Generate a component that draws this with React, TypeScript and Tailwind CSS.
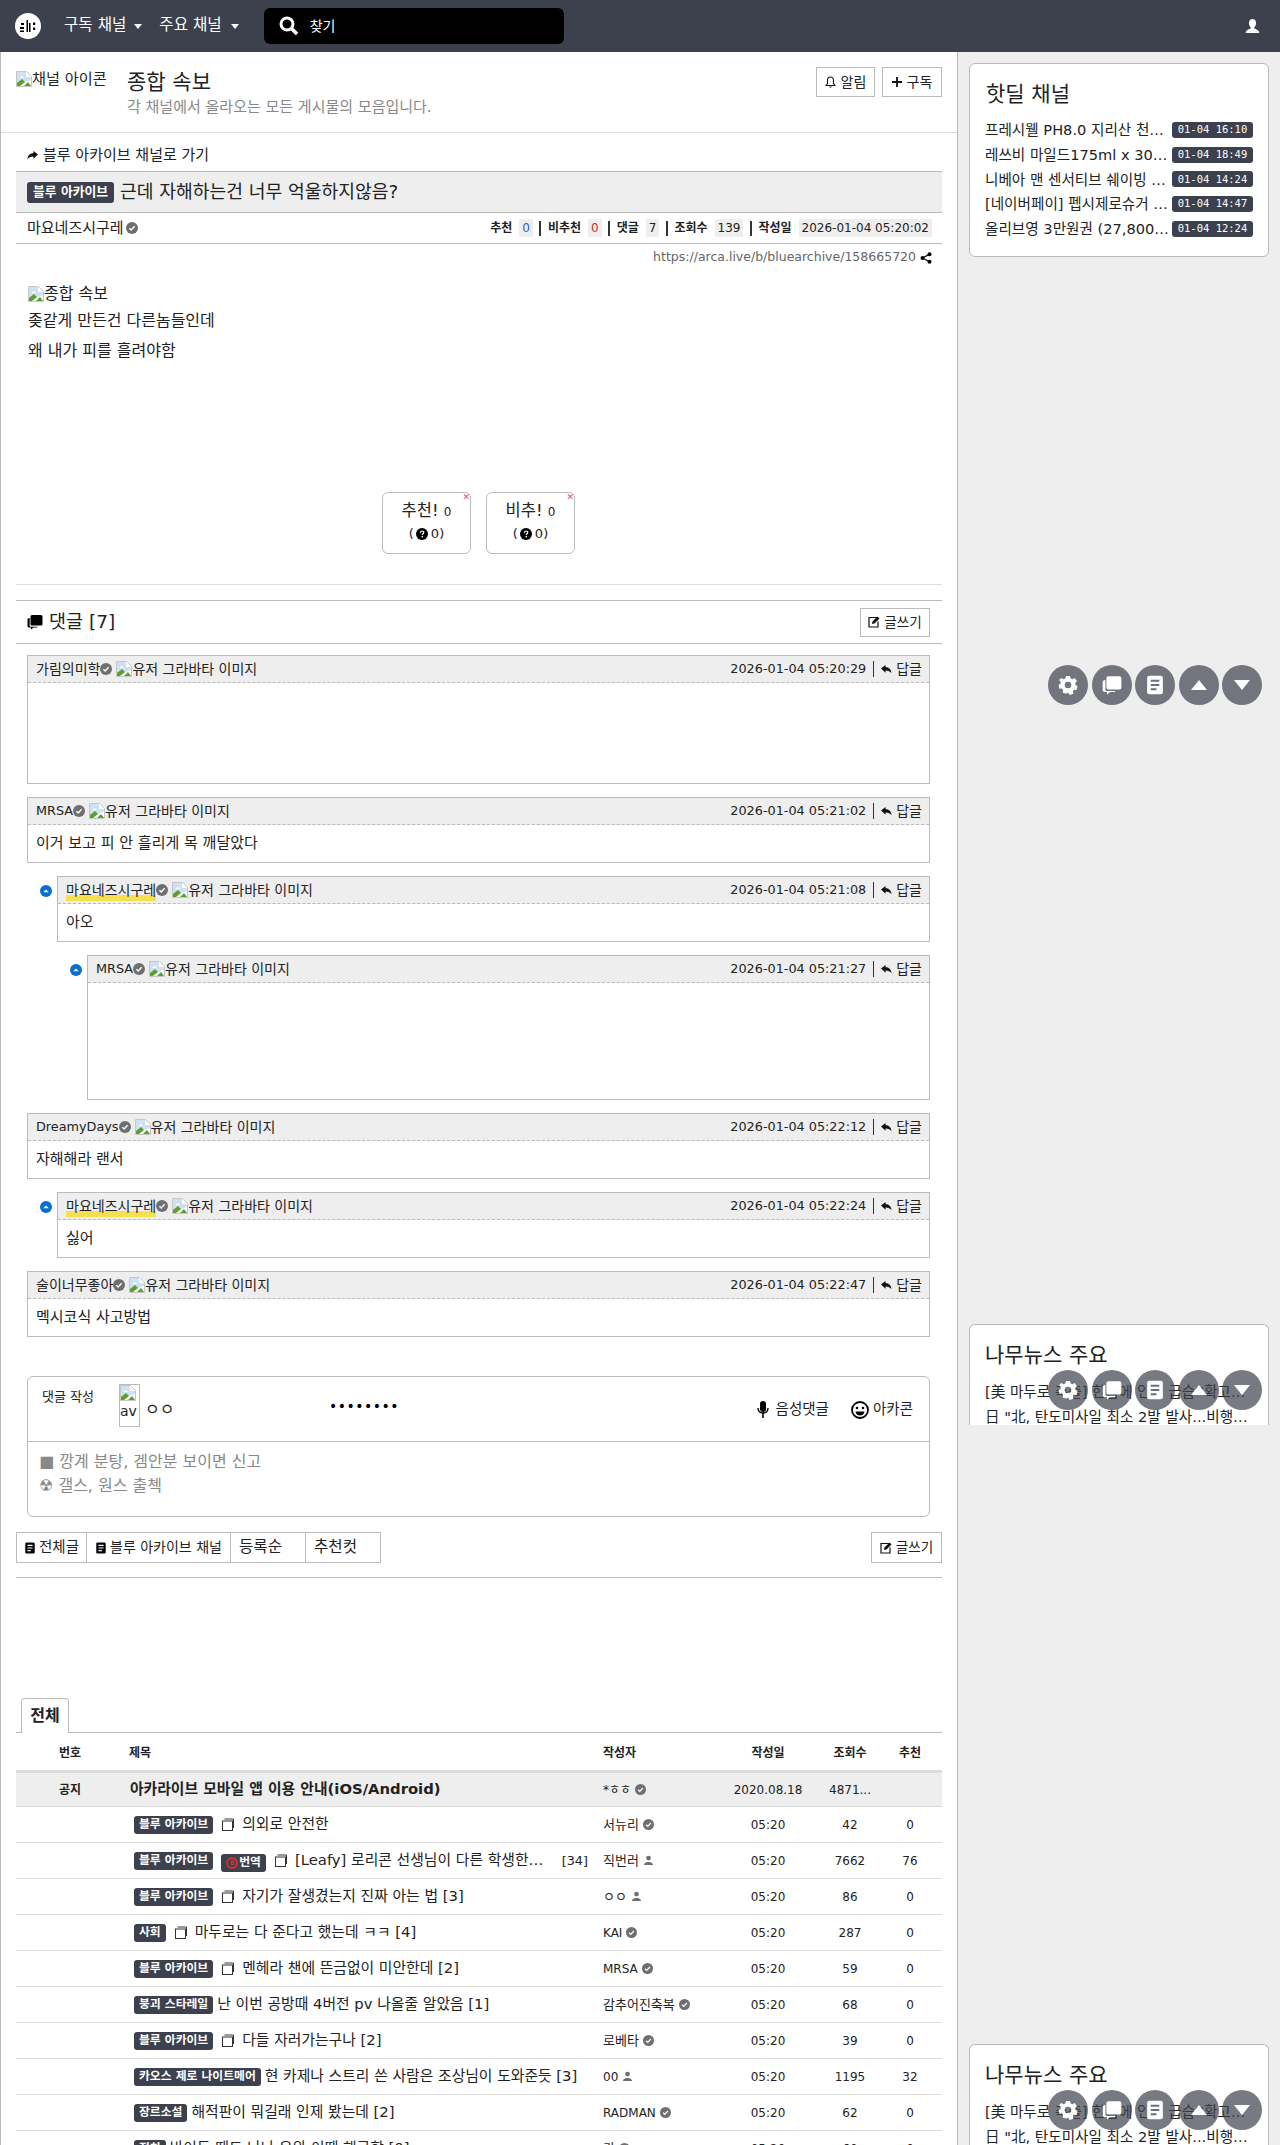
import React from "react";

const Check = ({ s = 12 }: { s?: number }) => (
  <svg width={s} height={s} viewBox="0 0 12 12" className="inline-block shrink-0">
    <circle cx="6" cy="6" r="6" fill="#6f6f6f" />
    <path d="M3.4 6.2 5.2 8 8.6 4.3" fill="none" stroke="#fff" strokeWidth="1.4" />
  </svg>
);

const Person = ({ s = 12, c = "#6f6f6f" }: { s?: number; c?: string }) => (
  <svg width={s} height={s} viewBox="0 0 12 12" className="inline-block shrink-0">
    <circle cx="6" cy="3.4" r="2.6" fill={c} />
    <path d="M1 11c0-2 2-3 3.6-3.4h2.8C9 8 11 9 11 11z" fill={c} />
  </svg>
);

const Broken = () => (
  <svg width="16" height="16" viewBox="0 0 16 16" className="inline-block shrink-0 align-[-3px]">
    <path d="M.5.5h10l5 5v10H.5z" fill="#fff" stroke="#c6c6c6" />
    <path d="M1 1h9v5h5v3L1 14z" fill="#cfe0f5" />
    <path d="M3 7l3-2 2 2z" fill="#fff" />
    <path d="M1 15v-3l5-4 3 3-5 4z" fill="#5aa02c" />
    <path d="M12 11l3 4H8z" fill="#5aa02c" />
  </svg>
);

const DocIcon = () => (
  <svg width="14" height="14" viewBox="0 0 14 14" className="inline-block shrink-0">
    <path d="M3.5 1h9v9" fill="none" stroke="#333" strokeWidth="1" />
    <rect x="1.5" y="3" width="10" height="9.5" fill="#fff" stroke="#333" />
  </svg>
);

const Paper = ({ s = 13, c = "#000", l = "#fff" }: { s?: number; c?: string; l?: string }) => (
  <svg width={s} height={s} viewBox="0 0 14 14" className="inline-block shrink-0">
    <rect x="1.5" y="0.5" width="11" height="13" rx="1.5" fill={c} />
    <path d="M4 4h6M4 7h6M4 10h4" stroke={l} strokeWidth="1.4" />
  </svg>
);

const Edit = () => (
  <svg width="12" height="12" viewBox="0 0 12 12" className="inline-block shrink-0">
    <path d="M9 1.5H1v9.5h9V5.5" fill="none" stroke="#111" strokeWidth="1.2" />
    <path d="M4.5 5.5 9.5 .5 11.5 2.5 6.5 7.5 4 8z" fill="#111" />
  </svg>
);

const Reply = () => (
  <svg width="11" height="11" viewBox="0 0 12 12" className="inline-block shrink-0">
    <path d="M0 5 5 1v2.6c3.5 0 6 2 6.5 6.4C10 8 8 7 5 7v2.6z" fill="#111" />
  </svg>
);

const Forward = () => (
  <svg width="11" height="11" viewBox="0 0 12 12" className="inline-block shrink-0">
    <path d="M12 5 7 1v2.6C3.5 3.6 1 5.6.5 10 2 8 4 7 7 7v2.6z" fill="#111" />
  </svg>
);

const Caret = () => (
  <svg width="8" height="5" viewBox="0 0 8 5" className="inline-block shrink-0">
    <path d="M0 0h8L4 5z" fill="#fff" />
  </svg>
);

const Collapse = () => (
  <svg width="12" height="12" viewBox="0 0 12 12" className="block">
    <circle cx="6" cy="6" r="6" fill="#0a6fd0" />
    <path d="M3.2 7.2 6 4.4l2.8 2.8z" fill="#fff" />
  </svg>
);

const Question = () => (
  <svg width="12" height="12" viewBox="0 0 12 12" className="inline-block shrink-0 align-[-2px]">
    <circle cx="6" cy="6" r="6" fill="#000" />
    <path d="M4.3 4.7C4.4 3.5 5.2 3 6.1 3c1 0 1.7.6 1.7 1.5 0 1.2-1.5 1.2-1.5 2.4" fill="none" stroke="#fff" strokeWidth="1.2" />
    <rect x="5.6" y="8" width="1.4" height="1.4" fill="#fff" />
  </svg>
);

const Chats = ({ s = 16, c = "#000" }: { s?: number; c?: string }) => (
  <svg width={s} height={s} viewBox="0 0 16 16" className="inline-block shrink-0">
    <path d="M5 1h9a1.5 1.5 0 0 1 1.5 1.5V10A1.5 1.5 0 0 1 14 11.500H5A1.500 1.500 0 0 1 3.500 10V2.500A1.500 1.500 0 0 1 5 1z" fill={c} />
    <path d="M2.700 4v7.500c0 .8.500 1.300 1.300 1.300h6.500v.7H6.500L4 15.500v-2H2c-.9 0-1.500-.6-1.500-1.500V5.500C.5 4.700 1.500 4 2.700 4z" fill={c} />
  </svg>
);

const Gear = () => (
  <svg width="20" height="20" viewBox="0 0 20 20">
    <path
      fillRule="evenodd"
      d="M8 1h4l.6 2.500 1.800.8L16.700 3l2.300 3.300-1.800 1.800.3 1.900 2 1.200-1 3.800-2.500-.2-1.200 1.500.6 2.500-3.700 1.200L10 17.500l-1.700 1.300L4.600 17.600l.6-2.500L4 13.600l-2.500.2-1-3.800 2-1.200.3-1.900L1 5l2.300-2 2.300 1.300 1.800-.8zM10 6.700a3.300 3.300 0 1 0 0 6.600 3.300 3.300 0 0 0 0-6.600z"
      fill="#fff"
    />
  </svg>
);

const Tri = ({ up }: { up: boolean }) => (
  <svg width="16" height="10" viewBox="0 0 16 10">
    <path d={up ? "M0 10 8 0l8 10z" : "M0 0h16L8 10z"} fill="#fff" />
  </svg>
);

function FloatBar({ top }: { top: string }) {
  const items = [
    <Gear key="g" />,
    <Chats key="c" s={20} c="#fff" />,
    <Paper key="p" s={20} c="#fff" l="#6b6f79" />,
    <Tri key="u" up />,
    <Tri key="d" up={false} />,
  ];
  return (
    <div className={`absolute left-[90px] flex gap-[3.5px] ${top}`}>
      {items.map((ic, i) => (
        <div key={i} className="w-[40px] h-[40px] rounded-full bg-[#3d414d]/70 flex items-center justify-center">
          {ic}
        </div>
      ))}
    </div>
  );
}

type CProps = {
  name: string;
  date: string;
  body?: string;
  h: string;
  depth?: 0 | 1 | 2;
  me?: boolean;
  first?: boolean;
  latin?: boolean;
};

function Comment({ name, date, body, h, depth = 0, me, first, latin }: CProps) {
  const ml = depth === 2 ? "ml-[60px]" : depth === 1 ? "ml-[30px]" : "";
  return (
    <div className={`relative ${first ? "" : "mt-[13px]"} ${ml}`}>
      {depth > 0 && (
        <div className="absolute top-[9px] -left-[17px]">
          <Collapse />
        </div>
      )}
      <div className={`border border-[#bbb] ${h}`}>
        <div className="h-[27px] bg-[#eee] border-b border-dashed border-[#bbb] flex items-center justify-between pl-[8px] pr-[7px]">
          <div className="flex items-center">
            <span className={`${latin ? "text-[12.8px]" : "text-[14px]"} ${me ? "bg-[linear-gradient(transparent_72%,#f5e050_72%)]" : ""}`}>
              {name}
            </span>
            <Check />
            <span className="ml-[4px] flex items-center whitespace-nowrap text-[14px]">
              <Broken />
              유저 그라바타 이미지
            </span>
          </div>
          <div className="flex items-center">
            <span className="text-[12.8px]">{date}</span>
            <span className="mx-[7px] w-[1px] h-[16px] bg-[#333]" />
            <Reply />
            <span className="ml-[4px] text-[14px]">답글</span>
          </div>
        </div>
        {body && <div className="pl-[8px] pt-[8px] text-[15px] leading-[20px]">{body}</div>}
      </div>
    </div>
  );
}

const Badge = ({ children }: { children: React.ReactNode }) => (
  <span className="inline-flex items-center shrink-0 h-[18px] px-[5px] rounded-[3px] bg-[#3d414d] text-white text-[11.8px] font-bold whitespace-nowrap leading-none">
    {children}
  </span>
);

type Row = {
  badge: string;
  doc?: boolean;
  title: string;
  count?: string;
  author: string;
  latin?: boolean;
  verified: boolean;
  views: string;
  rec: string;
  extra?: boolean;
};

const rows: Row[] = [
  { badge: "블루 아카이브", doc: true, title: "의외로 안전한", author: "서뉴리", verified: true, views: "42", rec: "0" },
  { badge: "블루 아카이브", extra: true, doc: true, title: "[Leafy] 로리콘 선생님이 다른 학생한테 들켰을 때", count: "[34]", author: "직번러", verified: false, views: "7662", rec: "76" },
  { badge: "블루 아카이브", doc: true, title: "자기가 잘생겼는지 진짜 아는 법 [3]", author: "ㅇㅇ", verified: false, views: "86", rec: "0" },
  { badge: "사회", doc: true, title: "마두로는 다 준다고 했는데 ㅋㅋ [4]", author: "KAI", latin: true, verified: true, views: "287", rec: "0" },
  { badge: "블루 아카이브", doc: true, title: "멘헤라 챈에 뜬금없이 미안한데 [2]", author: "MRSA", latin: true, verified: true, views: "59", rec: "0" },
  { badge: "붕괴 스타레일", title: "난 이번 공방때 4버전 pv 나올줄 알았음 [1]", author: "감추어진축복", verified: true, views: "68", rec: "0" },
  { badge: "블루 아카이브", doc: true, title: "다들 자러가는구나 [2]", author: "로베타", verified: true, views: "39", rec: "0" },
  { badge: "카오스 제로 나이트메어", title: "현 카제나 스트리 쓴 사람은 조상님이 도와준듯 [3]", author: "00", latin: true, verified: false, views: "1195", rec: "32" },
  { badge: "장르소설", title: "해적판이 뭐길래 인제 봤는데 [2]", author: "RADMAN", latin: true, verified: true, views: "62", rec: "0" },
  { badge: "정치", title: "바이든 때도 나나 우와 이때 해군함 [0]", author: "칸", verified: true, views: "60", rec: "0" },
];

function ListRow({ r }: { r: Row }) {
  return (
    <div className="flex items-center h-[36px] border-b border-[#ddd]">
      <div className="w-[113px]" />
      <div className="w-[474px] pl-[5px] flex items-center min-w-0 text-[14.8px]">
        <Badge>{r.badge}</Badge>
        {r.extra && (
          <span className="ml-[8px]">
            <Badge>
              <span className="mr-[1px] w-[12px] h-[12px] rounded-full border-2 border-[#c33] text-[#c33] text-[7px] flex items-center justify-center">
                8
              </span>
              번역
            </Badge>
          </span>
        )}
        {r.doc ? (
          <span className="ml-[8px] mr-[7px] flex items-center">
            <DocIcon />
          </span>
        ) : (
          <span className="w-[4px]" />
        )}
        <span className="truncate min-w-0 flex-1">{r.title}</span>
        {r.count && <span className="ml-[16px] mr-[15px] text-[12.8px]">{r.count}</span>}
      </div>
      <div className={`w-[127px] flex items-center gap-[4px] ${r.latin ? "text-[12px]" : "text-[13px]"}`}>
        <span>{r.author}</span>
        {r.verified ? <Check s={11} /> : <Person s={11} />}
      </div>
      <div className="w-[76px] text-center text-[12px]">05:20</div>
      <div className="w-[88px] text-center text-[12px]">{r.views}</div>
      <div className="w-[32px] text-center text-[12px]">{r.rec}</div>
    </div>
  );
}

const deals = [
  ["프레시웰 PH8.0 지리산 천연수 2L 12병 특가", "01-04 16:10"],
  ["레쓰비 마일드175ml x 30캔 무료배송 특가", "01-04 18:49"],
  ["니베아 맨 센서티브 쉐이빙 폼 200ml 특가", "01-04 14:24"],
  ["[네이버페이] 펩시제로슈거 라임 355ml 24캔", "01-04 14:47"],
  ["올리브영 3만원권 (27,800원) 카카오 특가", "01-04 12:24"],
];

function News({ cls }: { cls: string }) {
  return (
    <div className={`bg-white border-x border-t border-[#bbb] rounded-t-[6px] pl-[15px] pr-[15px] overflow-hidden ${cls}`}>
      <div className="text-[21px] leading-[24px] mt-[18px] mb-[12px]">나무뉴스 주요</div>
      <div className="truncate text-[14.6px] leading-[25px]">[美 마두로 축출] 한밤에 인근 급습 '확고한 결의' 작전 개시</div>
      <div className="truncate text-[14.6px] leading-[25px]">日 "北, 탄도미사일 최소 2발 발사...비행거리 약 900km" 발표</div>
    </div>
  );
}

export default function App() {
  return (
    <div className="w-[1280px] h-[2145px] overflow-hidden bg-[#eee] text-[#222] text-[14px] [font-family:'DejaVu_Sans','Noto_Sans_CJK_KR',sans-serif]">
      <header className="h-[52px] bg-[#3d414d] flex items-center text-white">
        <div className="ml-[15px] w-[26px] h-[26px] rounded-full bg-white flex items-center justify-center">
          <svg width="18" height="18" viewBox="0 0 18 18">
            <path d="M2 6h3v2H2zM1 10h4v2H1v1.500h4V15H1zM7.500 3h1.500v12H7.500zM10 6h1.500v9H10zM14 5.500h2.200V8H14zM14 10.500h2.200V13H14z" fill="#000" />
          </svg>
        </div>
        <span className="ml-[23px] text-[15.6px]">구독 채널</span>
        <span className="ml-[8px]"><Caret /></span>
        <span className="ml-[17px] text-[15.6px]">주요 채널</span>
        <span className="ml-[9px]"><Caret /></span>
        <div className="ml-[25px] w-[300px] h-[36px] bg-black rounded-[6px] flex items-center pl-[15px]">
          <svg width="20" height="20" viewBox="0 0 20 20">
            <circle cx="8" cy="8" r="6" fill="none" stroke="#fff" strokeWidth="3" />
            <path d="M12.500 12.500 18 18" stroke="#fff" strokeWidth="3.500" />
          </svg>
          <span className="ml-[11px] text-[14px]">찾기</span>
        </div>
        <div className="ml-auto mr-[20px] flex">
          <svg width="15" height="15" viewBox="0 0 15 15">
            <path d="M7.500 0c2.300 0 3.600 1.700 3.600 4 0 1.800-.8 3.300-1.800 4.200v1.300c1.700.7 5 1.500 5 4.500H.7c0-3 3.300-3.800 5-4.500V8.200C4.700 7.300 3.900 5.800 3.900 4c0-2.300 1.300-4 3.600-4z" fill="#fff" />
          </svg>
        </div>
      </header>

      <div className="flex h-[2093px]">
        <main className="w-[958px] h-full bg-white border-x border-[#bbb] overflow-hidden">
          <section className="h-[81px] border-b border-[#ddd] flex pl-[15px] pr-[15px]">
            <div className="w-[95px] mt-[17px] h-[20px] overflow-hidden flex items-center whitespace-nowrap text-[15.2px]">
              <Broken />
              채널 아이콘
            </div>
            <div className="ml-[16px] mt-[16px]">
              <div className="text-[21px] leading-[28px]">종합 속보</div>
              <div className="text-[15px] leading-[20px] mt-[1px] text-[#888]">각 채널에서 올라오는 모든 게시물의 모음입니다.</div>
            </div>
            <div className="ml-auto mt-[15px] flex gap-[7px] text-[14px]">
              <button className="w-[59px] h-[30px] border border-[#bbb] flex items-center justify-center gap-[5px]">
                <svg width="11" height="13" viewBox="0 0 11 13">
                  <path d="M5.500 1C3.500 1 2.500 2.500 2.500 4.500v3L1 9.500h9L8.500 7.500v-3C8.500 2.500 7.500 1 5.500 1zM4.500 11h2" fill="none" stroke="#111" strokeWidth="1.100" />
                </svg>
                알림
              </button>
              <button className="w-[60px] h-[30px] border border-[#bbb] flex items-center justify-center gap-[5px]">
                <svg width="10" height="10" viewBox="0 0 10 10">
                  <path d="M5 0v10M0 5h10" stroke="#111" strokeWidth="1.800" />
                </svg>
                구독
              </button>
            </div>
          </section>

          <div className="px-[15px]">
            <div className="h-[38px] pl-[11px] pt-[6px] flex items-center gap-[5px] text-[15px]">
              <Forward />
              블루 아카이브 채널로 가기
            </div>
            <div className="h-[42px] bg-[#eee] border-y border-[#bbb] pl-[11px] flex items-center gap-[6px]">
              <span className="inline-flex items-center h-[21px] px-[6px] rounded-[3px] bg-[#3d414d] text-white text-[12.8px] font-bold">블루 아카이브</span>
              <span className="text-[18.2px]">근데 자해하는건 너무 억울하지않음?</span>
            </div>
            <div className="h-[31px] border-b border-[#bbb] pl-[11px] pr-[10px] flex items-center justify-between">
              <div className="flex items-center gap-[2px] text-[15px]">
                마요네즈시구레
                <Check />
              </div>
              <div className="flex items-center text-[12px]">
                <b>추천</b>
                <span className="ml-[7px] px-[3px] bg-[#eee] text-[#2a5fd0]">0</span>
                <span className="mx-[6.5px] w-[2px] h-[15px] bg-[#333]" />
                <b>비추천</b>
                <span className="ml-[7px] px-[3px] bg-[#eee] text-[#d02a2a]">0</span>
                <span className="mx-[6.5px] w-[2px] h-[15px] bg-[#333]" />
                <b>댓글</b>
                <span className="ml-[7px] px-[3px] bg-[#eee]">7</span>
                <span className="mx-[6.5px] w-[2px] h-[15px] bg-[#333]" />
                <b>조회수</b>
                <span className="ml-[7px] px-[3px] bg-[#eee]">139</span>
                <span className="mx-[6.5px] w-[2px] h-[15px] bg-[#333]" />
                <b>작성일</b>
                <span className="ml-[7px] px-[3px] bg-[#eee]">2026-01-04 05:20:02</span>
              </div>
            </div>
            <div className="h-[27px] flex items-center justify-end pr-[10px] gap-[4px] text-[12.5px] text-[#666]">
              https://arca.live/b/bluearchive/158665720
              <svg width="12" height="12" viewBox="0 0 12 12">
                <circle cx="2.500" cy="6" r="2" fill="#000" />
                <circle cx="9.500" cy="2.200" r="2" fill="#000" />
                <circle cx="9.500" cy="9.800" r="2" fill="#000" />
                <path d="M2.500 6 9.500 2.200M2.500 6l7 3.800" stroke="#000" strokeWidth="1.200" />
              </svg>
            </div>
            <div className="pl-[12px] pt-[13px] h-[221px] text-[16px]">
              <div className="flex items-center h-[20px]">
                <Broken />
                종합 속보
              </div>
              <div className="mt-[7px] h-[20px] leading-[20px]">좆같게 만든건 다른놈들인데</div>
              <div className="mt-[10px] h-[20px] leading-[20px]">왜 내가 피를 흘려야함</div>
            </div>
            <div className="flex justify-center gap-[15px] pr-[1px]">
              {["추천!", "비추!"].map((t) => (
                <div key={t} className="relative w-[89px] h-[62px] border border-[#bbb] rounded-[6px] flex flex-col items-center">
                  <span className="absolute -top-[1px] right-0 text-[#e05a5a] text-[9px] leading-[10px]">✕</span>
                  <div className="mt-[7px] text-[16.5px] leading-[22px]">
                    {t} <span className="text-[12px]">0</span>
                  </div>
                  <div className="mt-[2px] text-[13px] leading-[18px] flex items-center gap-[2px]">
                    <span>(</span>
                    <Question />
                    <span className="ml-[1px]">0)</span>
                  </div>
                </div>
              ))}
            </div>
            <div className="mt-[30px] border-t border-[#ddd]" />
            <div className="mt-[15px] h-[44px] border-y border-[#bbb] pl-[11px] pr-[12px] flex items-center justify-between">
              <div className="flex items-center gap-[6px] text-[18.5px]">
                <Chats s={16} />
                댓글 [7]
              </div>
              <button className="w-[70px] h-[29px] border border-[#bbb] flex items-center justify-center gap-[4px] text-[13.6px]">
                <Edit />
                글쓰기
              </button>
            </div>

            <div className="mt-[11px] ml-[11px] mr-[12px]">
              <Comment first name="가림의미학" date="2026-01-04 05:20:29" h="h-[129px]" />
              <Comment name="MRSA" latin date="2026-01-04 05:21:02" body="이거 보고 피 안 흘리게 목 깨달았다" h="h-[66px]" />
              <Comment name="마요네즈시구레" me date="2026-01-04 05:21:08" body="아오" h="h-[66px]" depth={1} />
              <Comment name="MRSA" latin date="2026-01-04 05:21:27" h="h-[145px]" depth={2} />
              <Comment name="DreamyDays" latin date="2026-01-04 05:22:12" body="자해해라 랜서" h="h-[66px]" />
              <Comment name="마요네즈시구레" me date="2026-01-04 05:22:24" body="싫어" h="h-[66px]" depth={1} />
              <Comment name="술이너무좋아" date="2026-01-04 05:22:47" body="멕시코식 사고방법" h="h-[66px]" />

              <div className="mt-[39px] h-[141px] border border-[#bbb] rounded-[6px]">
                <div className="h-[65px] border-b border-[#bbb] flex relative">
                  <span className="ml-[14px] mt-[12px] text-[13px] leading-[16px] w-[53px] whitespace-nowrap">댓글 작성</span>
                  <div className="ml-[24px] mt-[7px] w-[21px] h-[43px] border border-[#bbb] overflow-hidden text-[14px] leading-[16px]">
                    <Broken />
                    <div className="mt-[2px]">av</div>
                  </div>
                  <span className="ml-[5px] mt-[25px] text-[16px] leading-[16px]">ㅇㅇ</span>
                  <span className="absolute left-[301px] top-[22px] text-[14px] leading-[14px] tracking-[0.5px] text-black">••••••••</span>
                  <div className="ml-auto flex items-center mr-[16px] mt-[1px] text-[14.5px]">
                    <svg width="12" height="17" viewBox="0 0 12 17">
                      <rect x="3" y="0" width="6" height="11" rx="3" fill="#000" />
                      <path d="M1 7c0 3 2 5 5 5s5-2 5-5" fill="none" stroke="#000" strokeWidth="1.400" />
                      <path d="M6 12v5" stroke="#000" strokeWidth="1.600" />
                    </svg>
                    <span className="ml-[7px]">음성댓글</span>
                    <svg className="ml-[22px]" width="18" height="18" viewBox="0 0 18 18">
                      <circle cx="9" cy="9" r="8" fill="none" stroke="#000" strokeWidth="1.800" />
                      <circle cx="6" cy="7" r="1.300" fill="#000" />
                      <circle cx="12" cy="7" r="1.300" fill="#000" />
                      <path d="M4.500 10.500h9c-.5 3-2.500 4-4.500 4s-4-1-4.500-4z" fill="#000" />
                    </svg>
                    <span className="ml-[4px]">아카콘</span>
                  </div>
                </div>
                <div className="pl-[11px] pt-[8px] text-[16px] leading-[24px] text-[#888]">
                  <div>■ 깡계 분탕, 겜안분 보이면 신고</div>
                  <div>☢ 갤스, 원스 출첵</div>
                </div>
              </div>
            </div>

            <div className="mt-[15px] h-[31px] flex">
              <div className="w-[71px] border border-[#bbb] flex items-center justify-center gap-[3px] text-[14.5px]"><Paper s={12} />전체글</div>
              <div className="w-[145px] -ml-[1px] border border-[#bbb] flex items-center justify-center gap-[3px] text-[14px]"><Paper s={12} />블루 아카이브 채널</div>
              <div className="w-[76px] -ml-[1px] border border-[#bbb] flex items-center pl-[8px] text-[15.6px]">등록순</div>
              <div className="w-[76px] -ml-[1px] border border-[#bbb] flex items-center pl-[8px] text-[15.6px]">추천컷</div>
              <button className="ml-auto w-[71px] border border-[#bbb] flex items-center justify-center gap-[4px] text-[13.6px]">
                <Edit />
                글쓰기
              </button>
            </div>
            <div className="mt-[14px] border-t border-[#bbb]" />

            <div className="mt-[120px] h-[35px] border-b border-[#bbb] flex pl-[5px]">
              <div className="w-[48px] h-[35px] border-x border-t border-[#bbb] rounded-t-[4px] bg-white flex items-center justify-center text-[16px] font-bold">전체</div>
            </div>
            <div className="flex items-center h-[37px] pt-[2px] text-[12px] font-bold">
              <div className="w-[113px] pl-[43px]">번호</div>
              <div className="w-[474px]">제목</div>
              <div className="w-[127px]">작성자</div>
              <div className="w-[76px] text-center">작성일</div>
              <div className="w-[88px] text-center">조회수</div>
              <div className="w-[32px] text-center">추천</div>
            </div>
            <div className="flex items-center h-[37px] bg-[#eee] border-t-[3px] border-b border-t-[#ddd] border-b-[#ddd]">
              <div className="w-[113px] pl-[43px] text-[12px] font-bold">공지</div>
              <div className="w-[474px] pl-[1px] text-[14.8px] font-bold whitespace-nowrap">아카라이브 모바일 앱 이용 안내(iOS/Android)</div>
              <div className="w-[127px] flex items-center gap-[4px] text-[12px]">*ㅎㅎ<Check s={11} /></div>
              <div className="w-[76px] text-center text-[12px]">2020.08.18</div>
              <div className="w-[88px] text-center text-[12px]">4871...</div>
              <div className="w-[32px]" />
            </div>
            {rows.map((r, i) => (
              <ListRow key={i} r={r} />
            ))}
          </div>
        </main>

        <aside className="relative flex-1 px-[11px] pt-[11px] min-w-0">
          <div className="h-[194px] bg-white border border-[#bbb] rounded-[6px] pl-[15px] pr-[15px] pt-[18px]">
            <div className="text-[21px] leading-[24px] mb-[12px] ml-[1px]">핫딜 채널</div>
            {deals.map(([t, d]) => (
              <div key={d} className="flex items-center h-[24.600px]">
                <span className="flex-1 min-w-0 truncate text-[14.6px] pr-[2px]">{t}</span>
                <span className="shrink-0 w-[81px] h-[16px] flex items-center justify-center rounded-[3px] bg-[#3d414d] text-white text-[10.500px] [font-family:'DejaVu_Sans_Mono',monospace]">
                  {d}
                </span>
              </div>
            ))}
          </div>
          <News cls="mt-[1067px] h-[101px]" />
          <News cls="mt-[619px] h-[101px]" />
          <FloatBar top="top-[613px]" />
          <FloatBar top="top-[1318px]" />
          <FloatBar top="top-[2038px]" />
        </aside>
      </div>
    </div>
  );
}
